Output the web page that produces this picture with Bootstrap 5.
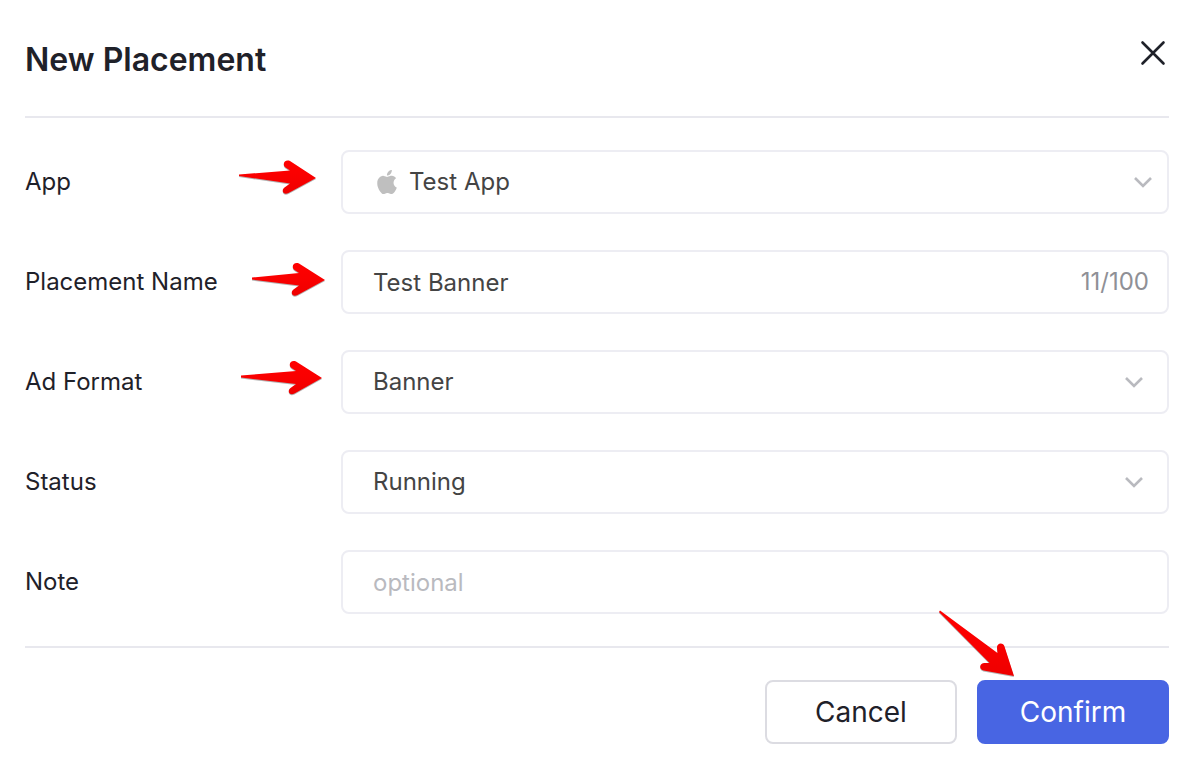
<!DOCTYPE html>
<html lang="en">
<head>
<meta charset="utf-8">
<meta name="viewport" content="width=device-width, initial-scale=1">
<title>New Placement</title>
<link href="https://cdn.jsdelivr.net/npm/bootstrap@5.3.0/dist/css/bootstrap.min.css" rel="stylesheet">
<style>
  body { font-family: Inter, "Liberation Sans", sans-serif; font-size: 24px; line-height: 32px; color: #1f2129; background: #fff; }
  .dialog-pane { padding: 32px 21px 20px 25px; }
  .dialog-head { padding-bottom: 28px; border-bottom: 2px solid #e8e8ee; }
  .dialog-title { font-size: 32px; line-height: 56px; font-weight: 600; }
  .close-btn { width: 32px; height: 32px; margin-top: 5px; color: #1f2129; }
  .fields { gap: 36px; padding: 32px 0; }
  .field-row { display: grid; grid-template-columns: 316px minmax(0, 1fr); align-items: center; }
  .field-row .form-control, .field-row .form-select {
    height: 64px; padding: 0 30px; border: 2px solid #ededf3; border-radius: 8px;
    font-size: 24px; line-height: 32px; color: #444; background-color: #fff;
  }
  .field-row .form-control::placeholder { color: #b9babf; opacity: 1; }
  .field-row .form-select {
    background-image: url("data:image/svg+xml,%3Csvg xmlns='http://www.w3.org/2000/svg' viewBox='0 0 20 12'%3E%3Cpath d='M2 2l8 8 8-8' fill='none' stroke='%23b9babf' stroke-width='2.6'/%3E%3C/svg%3E");
    background-size: 20px 12px; background-position: right 23px center;
  }
  .field-row .app-select { padding-left: 66px; background-position: right 14px center; }
  .field-row .name-input { padding-right: 110px; }
  .app-icon { left: 34px; top: 20px; color: #bfbfbf; }
  .counter { right: 20px; top: 16px; color: #8f9096; }
  .dialog-foot { gap: 20px; padding-top: 32px; border-top: 2px solid #e8e8ee; }
  .action-btn { width: 192px; height: 64px; padding: 0; font-size: 28px; line-height: 36px; border-radius: 8px; border-width: 2px; }
  .cancel-btn { --bs-btn-color: #1f2129; --bs-btn-bg: #fff; --bs-btn-border-color: #dcdce2; --bs-btn-hover-bg: #f6f6f9; }
  .confirm-btn { --bs-btn-color: #fff; --bs-btn-bg: #4865e3; --bs-btn-border-color: #4865e3; --bs-btn-hover-bg: #3c57cf; --bs-btn-hover-color: #fff; }
  .pointer { position: absolute; pointer-events: none; overflow: visible; filter: drop-shadow(0 1px 0 rgba(0,0,0,.3)); }
  .pointer-app { left: 214px; top: -6px; }
  .pointer-name { left: 227px; top: -4px; }
  .pointer-format { left: 216px; top: -5px; }
  .pointer-confirm { right: 154px; top: -70px; }
</style>
</head>
<body>
<svg class="position-absolute" width="0" height="0" aria-hidden="true">
  <defs>
    <linearGradient id="red" x1="0" y1="0" x2="0" y2="1"><stop offset="0" stop-color="#f00"/><stop offset=".5" stop-color="#f90000"/><stop offset="1" stop-color="#ee0000"/></linearGradient>
  </defs>
</svg>
<main class="dialog-pane">
  <header class="dialog-head d-flex justify-content-between align-items-start">
    <h1 class="dialog-title m-0">New Placement</h1>
    <button type="button" class="close-btn btn p-0 border-0 d-flex align-items-center justify-content-end" aria-label="Close">
      <svg width="32" height="32" viewBox="0 0 32 32" fill="none" stroke="currentColor" stroke-width="2.6" stroke-linecap="round"><path d="M5.500 5.500L26.500 26.500M26.500 5.500L5.500 26.500"/></svg>
    </button>
  </header>
  <form>
    <div class="fields d-flex flex-column">
      <div class="field-row">
        <div class="position-relative">
          <label for="app">App</label>
          <svg class="pointer pointer-app" width="77" height="34" viewBox="0 0 77 34" aria-hidden="true"><path fill="url(#red)" d="M0 14.500L51 10.500L46.500 7.500C42.500 4 46 -1 51 1L77 18L49.500 33C44 35.500 42 30 45.500 27.500L51 23.500L0 16Z"/></svg>
        </div>
        <div class="position-relative">
          <select id="app" class="form-select app-select"><option>Test App</option></select>
          <svg class="app-icon position-absolute" width="24" height="24" viewBox="0 0 16 16" fill="currentColor" aria-hidden="true"><path d="M11.182.008C11.148-.03 9.923.023 8.857 1.18c-1.066 1.156-.902 2.482-.878 2.516s1.52.087 2.475-1.258.762-2.391.728-2.43m3.314 11.733c-.048-.096-2.325-1.234-2.113-3.422s1.675-2.789 1.698-2.854-.597-.79-1.254-1.157a3.7 3.7 0 0 0-1.563-.434c-.108-.003-.483-.095-1.254.116-.508.139-1.653.589-1.968.607-.316.018-1.256-.522-2.267-.665-.647-.125-1.333.131-1.824.328-.49.196-1.422.754-2.074 2.237-.652 1.482-.311 3.83-.067 4.56s.625 1.924 1.273 2.796c.576.984 1.34 1.667 1.659 1.899s1.219.386 1.843.067c.502-.308 1.408-.485 1.766-.472.357.013 1.061.154 1.782.539.571.197 1.111.115 1.652-.105.541-.221 1.324-1.059 2.238-2.758q.52-1.185.473-1.282"/></svg>
        </div>
      </div>
      <div class="field-row">
        <div class="position-relative">
          <label for="name">Placement Name</label>
          <svg class="pointer pointer-name" width="73" height="34" viewBox="0 0 73 34" aria-hidden="true"><path fill="url(#red)" d="M0 15.500L47 11L42.500 8C38.500 4.500 42 -.5 47 1.500L73 18L45.500 33C40 35.500 38 30 41.500 27.500L47 23.500L0 17.500Z"/></svg>
        </div>
        <div class="position-relative">
          <input id="name" type="text" class="form-control name-input" value="Test Banner" maxlength="100">
          <span class="counter position-absolute">11/100</span>
        </div>
      </div>
      <div class="field-row">
        <div class="position-relative">
          <label for="format">Ad Format</label>
          <svg class="pointer pointer-format" width="81" height="34" viewBox="0 0 81 34" aria-hidden="true"><path fill="url(#red)" d="M0 14.500L55 10L50.500 7C46.500 3.500 50 -1.500 55 .5L81 17L53.500 32.500C48 35 46 29.500 49.500 27L55 23L0 16.500Z"/></svg>
        </div>
        <select id="format" class="form-select"><option>Banner</option></select>
      </div>
      <div class="field-row">
        <label for="status">Status</label>
        <select id="status" class="form-select"><option>Running</option></select>
      </div>
      <div class="field-row">
        <label for="note">Note</label>
        <input id="note" type="text" class="form-control" placeholder="optional">
      </div>
    </div>
    <footer class="dialog-foot d-flex justify-content-end">
      <button type="button" class="action-btn cancel-btn btn">Cancel</button>
      <div class="position-relative">
        <button type="submit" class="action-btn confirm-btn btn">Confirm</button>
        <svg class="pointer pointer-confirm" width="76" height="66" viewBox="0 0 76 66" aria-hidden="true"><path fill="url(#red)" d="M1 .5L58.500 43L58 38C57.500 32.500 64.500 32 65.500 36.500L75 66L44.500 60.500C39.500 59 40.500 53 45.500 53L50.500 53L0 2Z"/></svg>
      </div>
    </footer>
  </form>
</main>
<script src="https://cdn.jsdelivr.net/npm/bootstrap@5.3.0/dist/js/bootstrap.bundle.min.js"></script>
</body>
</html>
